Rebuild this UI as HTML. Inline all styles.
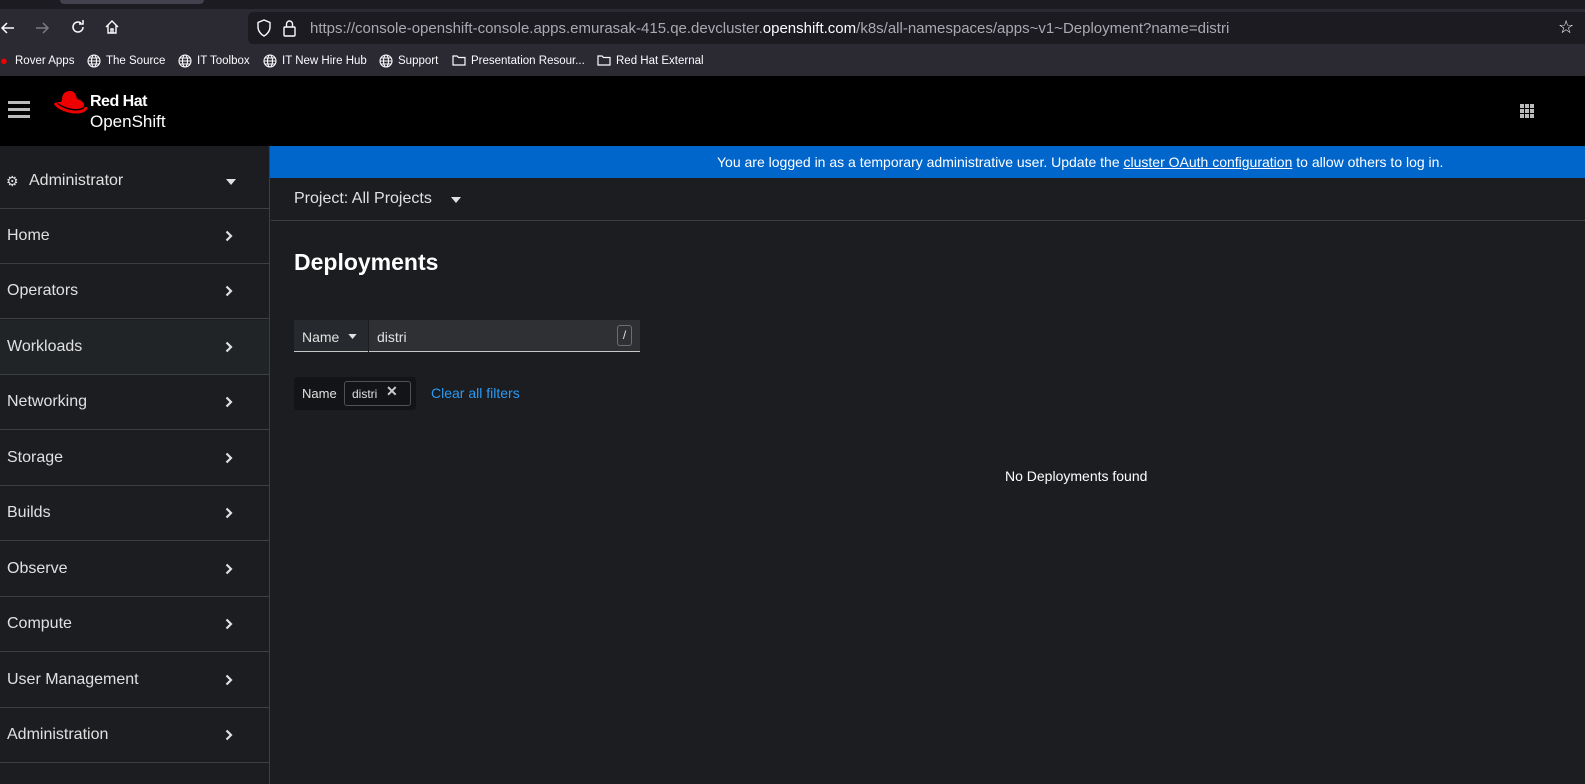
<!DOCTYPE html>
<html><head><meta charset="utf-8"><style>
*{box-sizing:border-box;margin:0;padding:0}
body{width:1585px;height:784px;overflow:hidden;background:#1b1d21;font-family:"Liberation Sans",sans-serif;color:#e0e0e0;position:relative}
.abs{position:absolute}
.tabs{left:0;top:0;width:1585px;height:9px;background:#1c1b22}
.tab{left:60px;top:0;width:144px;height:4px;background:#42414d;border-radius:0 0 4px 4px}
.nav{left:0;top:9px;width:1585px;height:35px;background:#2b2a33}
.url{left:248px;top:12px;width:1337px;height:32px;background:#1c1b22;border-radius:5px 0 0 5px}
.urltxt{left:310px;top:20px;font-size:15px;color:#a9a9b0;white-space:nowrap}
.urltxt b{color:#fbfbfe;font-weight:normal}
.bm{left:0;top:44px;width:1585px;height:32px;background:#2b2a33;font-size:11.5px;color:#fbfbfe}
.bm span{position:absolute;top:11px;white-space:nowrap}
.mast{left:0;top:76px;width:1585px;height:70px;background:#000}
.side{left:0;top:146px;width:270px;height:638px;background:#1b1d21;border-right:1px solid #3c3f42}
.item{position:absolute;left:0;width:269px;height:55px;border-bottom:1px solid #3c3f42;font-size:16px;color:#e0e0e0}
.item span{position:absolute;left:7px;top:18px}
.item svg{position:absolute;left:225px;top:21px}
.banner{left:270px;top:146px;width:1315px;height:32px;background:#0066cc;color:#fff;font-size:14px}
</style></head><body>
<div class="abs tabs"></div><div class="abs tab"></div>
<div class="abs nav"></div>
<svg class="abs" style="left:0;top:20px" width="16" height="16" viewBox="0 0 16 16"><path d="M14 8H2M7 3L2 8L7 13" fill="none" stroke="#fbfbfe" stroke-width="1.5"/></svg>
<svg class="abs" style="left:34px;top:20px" width="16" height="16" viewBox="0 0 16 16"><path d="M2 8H14M9 3L14 8L9 13" fill="none" stroke="#7a7a80" stroke-width="1.5"/></svg>
<svg class="abs" style="left:70px;top:19px" width="16" height="16" viewBox="0 0 16 16"><path d="M13 8A5 5 0 1 1 11 4M13 1V5H9" fill="none" stroke="#fbfbfe" stroke-width="1.5"/></svg>
<svg class="abs" style="left:104px;top:19px" width="16" height="16" viewBox="0 0 16 16"><path d="M2 8L8 2L14 8M4 6V14H12V6M7 14V10H9V14" fill="none" stroke="#fbfbfe" stroke-width="1.4"/></svg>
<div class="abs url"></div>
<svg class="abs" style="left:256px;top:19px" width="16" height="18" viewBox="0 0 16 18"><path d="M8 1L2 3.5V8C2 12 5 15.5 8 17C11 15.5 14 12 14 8V3.5Z" fill="none" stroke="#fbfbfe" stroke-width="1.4"/></svg>
<svg class="abs" style="left:282px;top:19px" width="16" height="18" viewBox="0 0 16 18"><rect x="2" y="8" width="11" height="9" rx="1" fill="none" stroke="#fbfbfe" stroke-width="1.4"/><path d="M4.5 8V5A3 3 0 0 1 10.5 5V8" fill="none" stroke="#fbfbfe" stroke-width="1.4"/></svg>
<div class="abs urltxt">https://console-openshift-console.apps.emurasak-415.qe.devcluster.<b>openshift.com</b>/k8s/all-namespaces/apps~v1~Deployment?name=distri</div>
<div class="abs" style="left:1558px;top:17px;font-size:18px;color:#fbfbfe">&#9734;</div>
<div class="abs bm">
<span style="left:0;top:9px;color:#e00;font-size:13px">&#9679;</span>
<span style="left:15px">Rover Apps</span>
<svg style="position:absolute;left:87px;top:10px" width="14" height="14" viewBox="0 0 14 14"><circle cx="7" cy="7" r="6" fill="none" stroke="#fbfbfe" stroke-width="1.1"/><ellipse cx="7" cy="7" rx="2.5" ry="6" fill="none" stroke="#fbfbfe" stroke-width="1.1"/><path d="M1 7H13M2 4H12M2 10H12" stroke="#fbfbfe" stroke-width="1"/></svg><span style="left:106px">The Source</span>
<svg style="position:absolute;left:178px;top:10px" width="14" height="14" viewBox="0 0 14 14"><circle cx="7" cy="7" r="6" fill="none" stroke="#fbfbfe" stroke-width="1.1"/><ellipse cx="7" cy="7" rx="2.5" ry="6" fill="none" stroke="#fbfbfe" stroke-width="1.1"/><path d="M1 7H13M2 4H12M2 10H12" stroke="#fbfbfe" stroke-width="1"/></svg><span style="left:197px">IT Toolbox</span>
<svg style="position:absolute;left:263px;top:10px" width="14" height="14" viewBox="0 0 14 14"><circle cx="7" cy="7" r="6" fill="none" stroke="#fbfbfe" stroke-width="1.1"/><ellipse cx="7" cy="7" rx="2.5" ry="6" fill="none" stroke="#fbfbfe" stroke-width="1.1"/><path d="M1 7H13M2 4H12M2 10H12" stroke="#fbfbfe" stroke-width="1"/></svg><span style="left:282px">IT New Hire Hub</span>
<svg style="position:absolute;left:379px;top:10px" width="14" height="14" viewBox="0 0 14 14"><circle cx="7" cy="7" r="6" fill="none" stroke="#fbfbfe" stroke-width="1.1"/><ellipse cx="7" cy="7" rx="2.5" ry="6" fill="none" stroke="#fbfbfe" stroke-width="1.1"/><path d="M1 7H13M2 4H12M2 10H12" stroke="#fbfbfe" stroke-width="1"/></svg><span style="left:398px">Support</span>
<svg style="position:absolute;left:452px;top:10px" width="14" height="12"><path d="M1 2H5L6.5 3.5H13V11H1Z" fill="none" stroke="#fbfbfe" stroke-width="1.2"/></svg><span style="left:471px">Presentation Resour...</span>
<svg style="position:absolute;left:597px;top:10px" width="14" height="12"><path d="M1 2H5L6.5 3.5H13V11H1Z" fill="none" stroke="#fbfbfe" stroke-width="1.2"/></svg><span style="left:616px">Red Hat External</span>
</div>
<div class="abs mast"></div>
<div class="abs" style="left:8px;top:101px;width:22px;height:3px;background:#bbb;box-shadow:0 7px 0 #bbb,0 14px 0 #bbb"></div>
<svg class="abs" style="left:54px;top:90px" width="34" height="26" viewBox="0 0 34 26"><path d="M8 10C8 4 11 1 16 1C20 1 22 4 23 9C27 10 30 12 30 15C30 18 26 19 22 19C15 19 5 15 3 12L7 12Z" fill="#e00"/><path d="M1 13C4 18 14 22 22 22C28 22 32 20 32 17" fill="none" stroke="#e00" stroke-width="3"/></svg>
<div class="abs" style="left:90px;top:93px;font-size:16px;font-weight:bold;color:#fff;letter-spacing:-0.5px">Red Hat</div>
<div class="abs" style="left:90px;top:112px;font-size:17px;color:#fff">OpenShift</div>
<div class="abs" style="left:1520px;top:104px;width:4px;height:4px;background:#bbb;box-shadow:5px 0 #bbb,10px 0 #bbb,0 5px #bbb,5px 5px #bbb,10px 5px #bbb,0 10px #bbb,5px 10px #bbb,10px 10px #bbb"></div>
<div class="abs side">
<div class="item" style="top:8px;height:55px"><span style="left:6px;top:19px;font-size:14px">&#9881;&#xFE0E;</span><span style="left:29px;top:18px">Administrator</span><svg width="10" height="6" style="left:226px;top:25px" viewBox="0 0 10 6"><path d="M0 0H10L5 6Z" fill="#e0e0e0"/></svg></div>
<div class="item" style="top:63px"><span>Home</span><svg width="8" height="12" viewBox="0 0 8 12"><path d="M1.5 1.5L6 6L1.5 10.5" fill="none" stroke="#e0e0e0" stroke-width="2.2"/></svg></div>
<div class="item" style="top:118px"><span>Operators</span><svg width="8" height="12" viewBox="0 0 8 12"><path d="M1.5 1.5L6 6L1.5 10.5" fill="none" stroke="#e0e0e0" stroke-width="2.2"/></svg></div>
<div class="item" style="top:174px;background:#212427"><span>Workloads</span><svg width="8" height="12" viewBox="0 0 8 12"><path d="M1.5 1.5L6 6L1.5 10.5" fill="none" stroke="#e0e0e0" stroke-width="2.2"/></svg></div>
<div class="item" style="top:229px"><span>Networking</span><svg width="8" height="12" viewBox="0 0 8 12"><path d="M1.5 1.5L6 6L1.5 10.5" fill="none" stroke="#e0e0e0" stroke-width="2.2"/></svg></div>
<div class="item" style="top:285px"><span>Storage</span><svg width="8" height="12" viewBox="0 0 8 12"><path d="M1.5 1.5L6 6L1.5 10.5" fill="none" stroke="#e0e0e0" stroke-width="2.2"/></svg></div>
<div class="item" style="top:340px"><span>Builds</span><svg width="8" height="12" viewBox="0 0 8 12"><path d="M1.5 1.5L6 6L1.5 10.5" fill="none" stroke="#e0e0e0" stroke-width="2.2"/></svg></div>
<div class="item" style="top:396px"><span>Observe</span><svg width="8" height="12" viewBox="0 0 8 12"><path d="M1.5 1.5L6 6L1.5 10.5" fill="none" stroke="#e0e0e0" stroke-width="2.2"/></svg></div>
<div class="item" style="top:451px"><span>Compute</span><svg width="8" height="12" viewBox="0 0 8 12"><path d="M1.5 1.5L6 6L1.5 10.5" fill="none" stroke="#e0e0e0" stroke-width="2.2"/></svg></div>
<div class="item" style="top:507px"><span>User Management</span><svg width="8" height="12" viewBox="0 0 8 12"><path d="M1.5 1.5L6 6L1.5 10.5" fill="none" stroke="#e0e0e0" stroke-width="2.2"/></svg></div>
<div class="item" style="top:562px"><span>Administration</span><svg width="8" height="12" viewBox="0 0 8 12"><path d="M1.5 1.5L6 6L1.5 10.5" fill="none" stroke="#e0e0e0" stroke-width="2.2"/></svg></div>
</div>
<div class="abs banner"><div class="abs" style="left:447px;top:8px;white-space:nowrap">You are logged in as a temporary administrative user. Update the <u>cluster OAuth configuration</u> to allow others to log in.</div></div>
<div class="abs" style="left:294px;top:190px;font-size:16px;color:#e0e0e0">Project: All Projects</div>
<svg class="abs" style="left:451px;top:197px" width="10" height="6" viewBox="0 0 10 6"><path d="M0 0H10L5 6Z" fill="#e0e0e0"/></svg>
<div class="abs" style="left:271px;top:220px;width:1314px;height:1px;background:#3c3f42"></div>
<div class="abs" style="left:294px;top:249px;font-size:23px;font-weight:bold;color:#fff">Deployments</div>
<div class="abs" style="left:294px;top:320px;width:74px;height:32px;background:#26292d;border-bottom:1px solid #c7c7c7"></div>
<div class="abs" style="left:302px;top:329px;font-size:14px">Name</div>
<svg class="abs" style="left:348px;top:334px" width="9" height="5" viewBox="0 0 10 6"><path d="M0 0H10L5 6Z" fill="#e0e0e0"/></svg>
<div class="abs" style="left:369px;top:320px;width:271px;height:32px;background:#2e3034;border-bottom:1px solid #c7c7c7"></div>
<div class="abs" style="left:377px;top:329px;font-size:14px">distri</div>
<div class="abs" style="left:617px;top:325px;width:15px;height:21px;border:1px solid #6a6e73;border-radius:3px;font-size:12px;text-align:center;line-height:19px">/</div>
<div class="abs" style="left:294px;top:377px;width:122px;height:33px;background:#131417;border-radius:3px"></div>
<div class="abs" style="left:302px;top:386px;font-size:13px">Name</div>
<div class="abs" style="left:344px;top:381px;width:67px;height:25px;border:1px solid #4f5255;border-radius:3px"></div>
<div class="abs" style="left:352px;top:387px;font-size:12px">distri</div>
<div class="abs" style="left:386px;top:383px;font-size:14px;font-weight:bold;color:#ccc">&#10005;</div>
<div class="abs" style="left:431px;top:385px;font-size:14px;color:#2b9af3">Clear all filters</div>
<div class="abs" style="left:1005px;top:468px;font-size:14px;color:#fff">No Deployments found</div>
</body></html>
